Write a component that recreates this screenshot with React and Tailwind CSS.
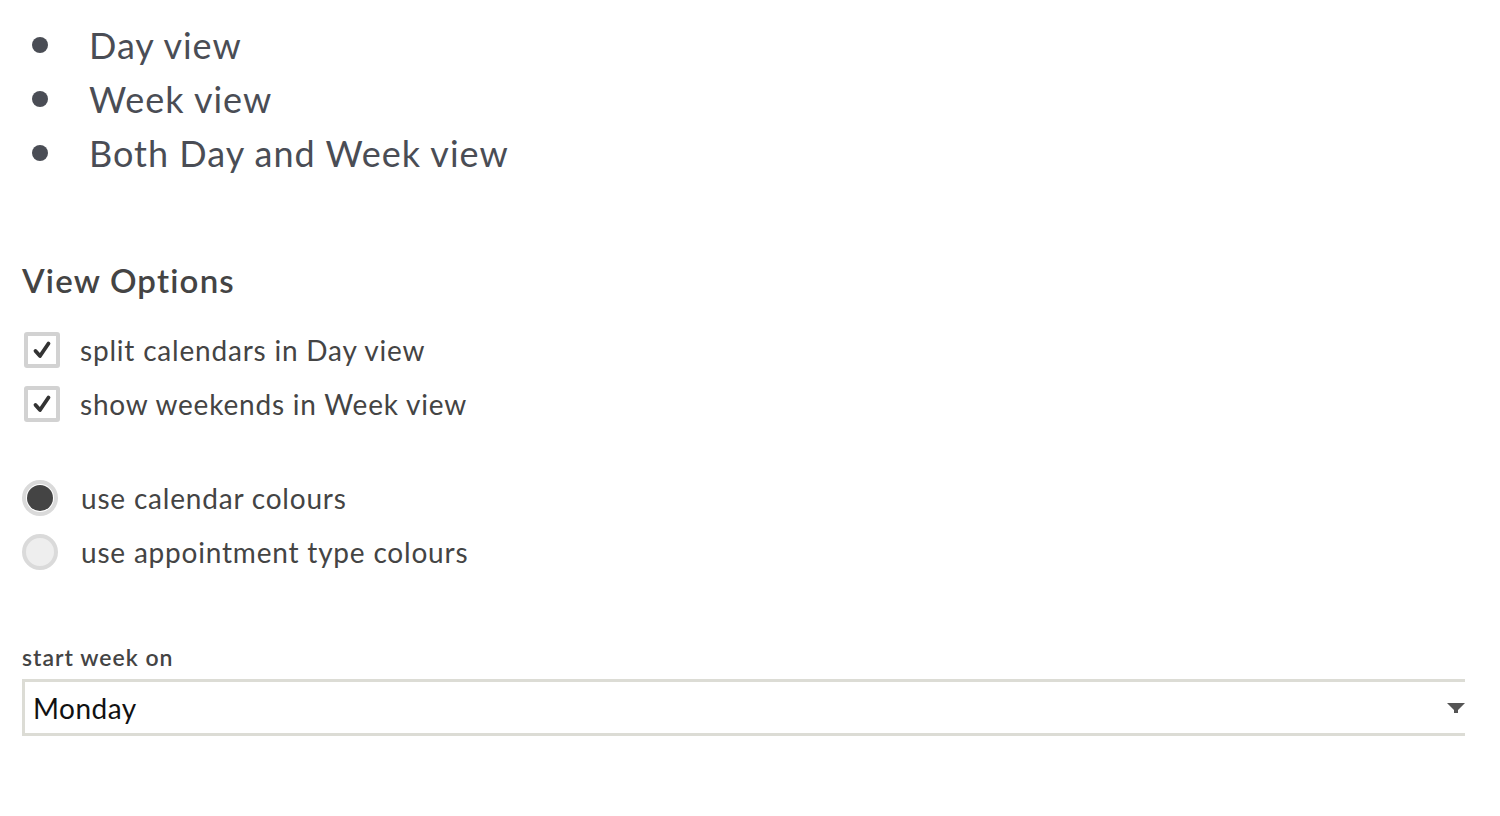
import React from 'react';

const font = { fontFamily: 'Lato, "Open Sans", sans-serif' };

function Check() {
  return (
    <span className="flex h-[36px] w-[36px] shrink-0 items-center justify-center rounded-[3px] border-[4px] border-[#d2d2d2] bg-white">
      <svg viewBox="0 0 24 24" className="h-[24px] w-[24px]">
        <path d="M5.5 13 L10 18 L18.5 5.5" fill="none" stroke="#333" strokeWidth="3.8" strokeLinecap="round" strokeLinejoin="round" />
      </svg>
    </span>
  );
}

function Radio({ on }) {
  return (
    <span className={`flex h-[36px] w-[36px] shrink-0 items-center justify-center rounded-full border-[4px] border-[#dadada] ${on ? 'bg-white' : 'bg-[#eeeeee]'}`}>
      {on && <span className="h-[26px] w-[26px] rounded-full bg-[#444]" />}
    </span>
  );
}

export default function App() {
  const views = ['Day view', 'Week view', 'Both Day and Week view'];

  return (
    <div className="min-h-[816px] bg-white text-[#444]" style={font}>
      <ul className="pt-[18px]">
        {views.map(v => (
          <li key={v} className="flex h-[54px] items-center text-[36px] tracking-[1px] text-[#4a4d55]">
            <span className="ml-[32px] mr-[41px] h-[16px] w-[16px] rounded-full bg-[#4a4d55]" />
            {v}
          </li>
        ))}
      </ul>

      <h2 className="ml-[22px] mt-[78px] text-[33px] font-semibold leading-[44px] tracking-[1.2px] text-[#444]">View Options</h2>

      <div className="mt-[30px] ml-[24px] flex flex-col gap-[18px]">
        <label className="flex items-center gap-[20px] text-[28px] leading-[36px] tracking-[0.8px]">
          <Check /> split calendars in Day view
        </label>
        <label className="flex items-center gap-[20px] text-[28px] leading-[36px] tracking-[0.8px]">
          <Check /> show weekends in Week view
        </label>
      </div>

      <div className="mt-[58px] ml-[22px] flex flex-col gap-[18px]">
        <label className="flex items-center gap-[23px] text-[28px] leading-[36px] tracking-[0.8px]">
          <Radio on /> use calendar colours
        </label>
        <label className="flex items-center gap-[23px] text-[28px] leading-[36px] tracking-[0.8px]">
          <Radio /> use appointment type colours
        </label>
      </div>

      <div className="mt-[72px] ml-[22px] w-[1443px]">
        <div className="text-[23px] font-semibold leading-[30px] tracking-[1px] text-[#444]">start week on</div>
        <div className="mt-[7px] flex h-[57px] items-center justify-between border-y-[3px] border-l-[3px] border-[#dcdcd5] pl-[8px]">
          <span className="text-[28px] tracking-[0.5px] text-[#111]">Monday</span>
          <svg viewBox="0 0 18 10" className="h-[10px] w-[18px]">
            <path d="M0 0 H18 L11 7 V10 H7 V7 Z" fill="#555" />
          </svg>
        </div>
      </div>
    </div>
  );
}
